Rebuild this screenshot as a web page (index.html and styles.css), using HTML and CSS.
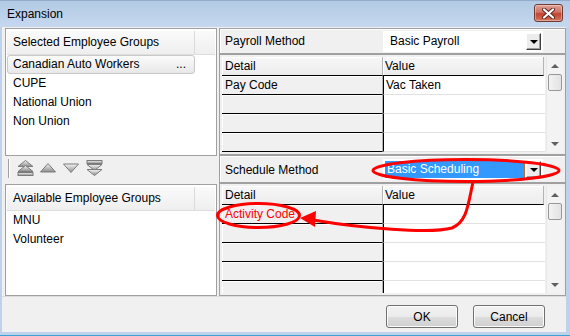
FILE: index.html
```html
<!DOCTYPE html>
<html lang="en">
<head>
    <meta charset="UTF-8">
    <title>Expansion</title>
    <link rel="stylesheet" href="styles.css">
</head>
<body>
<div class="window">
    <div class="titlebar">
        <span class="title">Expansion</span>
        <span class="close">
            <svg width="13" height="11" viewBox="0 0 13 11">
                <path d="M2 1.5 L11 9.5 M11 1.5 L2 9.5" stroke="#5a2620" stroke-width="4" stroke-linecap="round"/>
                <path d="M2 1.5 L11 9.5 M11 1.5 L2 9.5" stroke="#fff" stroke-width="2.2" stroke-linecap="round"/>
            </svg>
        </span>
    </div>
    <div class="frame">
        <div class="client">
            <div class="main">
                <div class="left">
                    <div class="list selected">
                        <div class="list-head"><div class="hcell">Selected Employee Groups</div><div class="hcell rest"></div></div>
                        <div class="item current"><span>Canadian Auto Workers</span><span class="more">...</span></div>
                        <div class="item">CUPE</div>
                        <div class="item">National Union</div>
                        <div class="item">Non Union</div>
                    </div>
                    <div class="toolbar">
                        <span class="grip"></span>
                        <svg class="tb top" width="17" height="16" viewBox="0 0 17 16">
                            <defs>
                                <linearGradient id="tg" x1="0" y1="0" x2="0" y2="1">
                                    <stop offset="0" stop-color="#f6f6f6"/>
                                    <stop offset="1" stop-color="#8c8c8c"/>
                                </linearGradient>
                            </defs>
                            <path d="M8.5 0.5 L16 6.5 H1 Z" fill="url(#tg)" stroke="#7c7c7c"/>
                            <path d="M8.5 5.5 L16 11.5 H1 Z" fill="url(#tg)" stroke="#7c7c7c"/>
                            <rect x="1" y="12.5" width="15" height="3" fill="url(#tg)" stroke="#7c7c7c"/>
                        </svg>
                        <svg class="tb up" width="16" height="10" viewBox="0 0 16 10">
                            <path d="M8 0.5 L15.5 9 H0.5 Z" fill="url(#tg)" stroke="#7c7c7c"/>
                        </svg>
                        <svg class="tb down" width="16" height="10" viewBox="0 0 16 10">
                            <path d="M0.5 1 H15.5 L8 9.5 Z" fill="url(#tg)" stroke="#7c7c7c"/>
                        </svg>
                        <svg class="tb bottom" width="17" height="16" viewBox="0 0 17 16">
                            <rect x="1" y="0.5" width="15" height="3" fill="url(#tg)" stroke="#7c7c7c"/>
                            <path d="M1 4.5 H16 L8.5 10.5 Z" fill="url(#tg)" stroke="#7c7c7c"/>
                            <path d="M1 9.5 H16 L8.5 15.5 Z" fill="url(#tg)" stroke="#7c7c7c"/>
                        </svg>
                    </div>
                    <div class="list available">
                        <div class="list-head"><div class="hcell">Available Employee Groups</div><div class="hcell rest"></div></div>
                        <div class="item">MNU</div>
                        <div class="item">Volunteer</div>
                    </div>
                </div>

                <div class="right">
                    <div class="method payroll">
                        <span class="method-label">Payroll Method</span>
                        <div class="combo">
                            <span class="combo-text">Basic Payroll</span>
                            <span class="combo-btn"><i class="caret"></i></span>
                        </div>
                    </div>
                    <div class="grid grid-payroll">
                        <div class="table">
                            <div class="th">Detail</div><div class="th value">Value</div>
                            <div class="rh">Pay Code</div><div class="td">Vac Taken</div>
                            <div class="rh"></div><div class="td"></div>
                            <div class="rh"></div><div class="td"></div>
                            <div class="rh"></div><div class="td"></div>
                            <div class="rh"></div><div class="td"></div>
                        </div>
                        <div class="vscroll">
                            <span class="sb-btn"><i class="sb-up"></i></span>
                            <span class="thumb"></span>
                            <span class="sb-track"></span>
                            <span class="sb-btn"><i class="sb-down"></i></span>
                        </div>
                    </div>
                    <div class="method schedule">
                        <span class="method-label">Schedule Method</span>
                        <div class="combo">
                            <span class="combo-text chosen">Basic Scheduling</span>
                            <span class="combo-btn"><i class="caret"></i></span>
                        </div>
                    </div>
                    <div class="grid grid-schedule">
                        <div class="table">
                            <div class="th">Detail</div><div class="th value">Value</div>
                            <div class="rh required">Activity Code</div><div class="td"></div>
                            <div class="rh"></div><div class="td"></div>
                            <div class="rh"></div><div class="td"></div>
                            <div class="rh"></div><div class="td"></div>
                            <div class="rh"></div><div class="td"></div>
                        </div>
                        <div class="vscroll">
                            <span class="sb-btn"><i class="sb-up"></i></span>
                            <span class="thumb"></span>
                            <span class="sb-track"></span>
                            <span class="sb-btn"><i class="sb-down"></i></span>
                        </div>
                    </div>
                </div>
            </div>
            <div class="footer">
                <button class="btn">OK</button>
                <button class="btn">Cancel</button>
            </div>
        </div>
    </div>

    <!-- red callout drawn on top of the dialog -->
    <svg class="marks" width="570" height="336" viewBox="0 0 570 336">
        <g fill="none" stroke="#ff0000" stroke-width="3">
            <ellipse cx="466" cy="170.5" rx="93" ry="11"/>
            <ellipse cx="258.5" cy="215.5" rx="41" ry="12"/>
            <path d="M473 182 C468 205 467 222 452 228 C430 234 360 228 313 220"/>
        </g>
        <polygon points="300,218 316,211 315,227" fill="#ff0000"/>
    </svg>
</div>
</body>
</html>
```

FILE: styles.css
```css
* {
    box-sizing: border-box;
}

html,
body {
    margin: 0;
    padding: 0;
}

body {
    width: 570px;
    height: 336px;
    overflow: hidden;
    font-family: "Liberation Sans", Arial, sans-serif;
    font-size: 12px;
    color: #000;
}

.window {
    position: relative;
    width: 570px;
    height: 336px;
    background: #bed3eb;
}

.titlebar {
    height: 27px;
    display: flex;
    align-items: flex-start;
    padding: 0 7px;
    background: linear-gradient(#b3cae5, #c5d8ee);
    border-top: 1px solid #93acc9;
}

.title {
    line-height: 25px;
    padding-top: 1px;
}

.close {
    margin: 3px 0 0 auto;
    width: 29px;
    height: 18px;
    display: flex;
    align-items: center;
    justify-content: center;
    border: 1px solid #6e3a35;
    border-radius: 3px;
    background: linear-gradient(#e0a396 0%, #cf7262 45%, #c2432f 55%, #d5755f 100%);
    box-shadow: inset 0 0 0 1px rgba(255, 255, 255, 0.35);
}

.frame {
    height: 309px;
    padding: 0 4px 3px 2px;
    border-bottom: 1px solid #3aa3d4;
}

.client {
    height: 305px;
    background: #f0f0f0;
    display: flex;
    flex-direction: column;
}

.main {
    height: 269px;
    display: flex;
    gap: 2px;
    padding: 1px 0 0 3px;
}

/* left column */

.left {
    width: 212px;
    display: flex;
    flex-direction: column;
}

.list {
    background: #fff;
    border: 1px solid #a0a0a0;
    padding: 2px 1px 1px;
}

.selected {
    height: 128px;
}

.available {
    flex: 1;
}

.list-head {
    display: flex;
    height: 24px;
    background: linear-gradient(#fafafa, #efefef);
    border-bottom: 1px solid #dedede;
}

.hcell {
    width: 188px;
    line-height: 23px;
    padding-left: 6px;
    border-right: 1px solid #dadada;
}

.hcell.rest {
    flex: 1;
    border-right: 0;
}

.item {
    height: 19px;
    line-height: 19px;
    padding-left: 6px;
}

.item.current {
    width: 188px;
    display: flex;
    justify-content: space-between;
    padding: 0 8px 0 5px;
    line-height: 17px;
    border: 1px solid #c9c9c9;
    border-radius: 3px;
    background: linear-gradient(#fbfbfb, #e8e8e8);
}

.available .item:first-of-type {
    margin-top: 1px;
}

.toolbar {
    height: 28px;
    display: flex;
    align-items: flex-start;
    padding: 4px 0 0 3px;
}

.grip {
    width: 2px;
    height: 19px;
    margin-top: -1px;
    border-left: 1px solid #a0a0a0;
    border-right: 1px solid #fff;
}

.tb.top {
    margin-left: 7px;
}

.tb.up {
    margin-left: 6px;
    margin-top: 3px;
}

.tb.down {
    margin-left: 7px;
    margin-top: 3px;
}

.tb.bottom {
    margin-left: 7px;
}

/* right column */

.right {
    flex: 1;
    display: flex;
    flex-direction: column;
}

.method {
    display: flex;
    align-items: center;
    padding-left: 5px;
    border: 1px solid #a0a0a0;
    box-shadow: inset 1px 1px 0 #fff;
}

.payroll {
    height: 26px;
}

.schedule {
    height: 28px;
    padding-top: 1px;
}

.method-label {
    width: 158px;
}

.combo {
    width: 160px;
    height: 21px;
    display: flex;
    align-items: center;
    padding: 2px;
    background: #fff;
}

.combo-text {
    flex: 1;
    padding-left: 5px;
}

.combo-text.chosen {
    height: 17px;
    line-height: 17px;
    padding-left: 2px;
    margin-right: 1px;
    background: #3399ff;
    color: #fff;
    border-right: 1px solid #b8733a;
}

.combo-btn {
    width: 15px;
    height: 17px;
    display: flex;
    align-items: center;
    justify-content: center;
    background: #ececec;
    border: 1px solid;
    border-color: #fff #404040 #404040 #fff;
    box-shadow: inset -1px -1px 0 #a0a0a0;
}

.caret {
    width: 0;
    height: 0;
    border-left: 4px solid transparent;
    border-right: 4px solid transparent;
    border-top: 4px solid #000;
    margin-top: 1px;
}

.grid {
    display: flex;
    padding: 2px;
    border: 1px solid #a0a0a0;
    background: #f0f0f0;
    overflow: hidden;
}

.grid-payroll {
    height: 101px;
}

.grid-schedule {
    flex: 1;
}

.table {
    flex: 1;
    display: grid;
    grid-template-columns: 161px 1fr;
    grid-auto-rows: 19px;
    align-content: start;
    overflow: hidden;
}

.th {
    line-height: 19px;
    padding-left: 3px;
    background: linear-gradient(#f7f7f7, #ececec);
    border-bottom: 1px solid #000;
    border-right: 1px solid #b4b4b4;
    box-shadow: inset 1px 1px 0 #fff;
}

.th.value {
    padding-left: 2px;
    margin-right: 1px;
}

.rh {
    line-height: 19px;
    padding-left: 3px;
    background: #f0f0f0;
    border-bottom: 1px solid #000;
    border-right: 1px solid #b4b4b4;
    box-shadow: inset 1px 1px 0 #fff;
}

.rh.required {
    color: #ff0000;
}

.td {
    line-height: 19px;
    padding-left: 2px;
    background: #fff;
    border-left: 1px solid #000;
    border-bottom: 1px solid #e2e2e2;
}

.vscroll {
    width: 17px;
    margin-left: 1px;
    display: flex;
    flex-direction: column;
    background: #f3f3f3;
    border-left: 1px solid #e8e8e8;
}

.sb-btn {
    height: 17px;
    display: flex;
    align-items: center;
    justify-content: center;
}

.sb-up {
    width: 0;
    height: 0;
    border-left: 4px solid transparent;
    border-right: 4px solid transparent;
    border-bottom: 4px solid #606060;
}

.sb-down {
    width: 0;
    height: 0;
    border-left: 4px solid transparent;
    border-right: 4px solid transparent;
    border-top: 4px solid #606060;
}

.thumb {
    height: 17px;
    margin: 0 1px;
    border: 1px solid #979797;
    border-radius: 2px;
    background: linear-gradient(90deg, #f3f3f3, #e2e2e2);
}

.sb-track {
    flex: 1;
}

/* buttons */

.footer {
    flex: 1;
    display: flex;
    justify-content: flex-end;
    align-items: flex-start;
    gap: 15px;
    padding: 8px 21px 0 0;
    border-top: 1px solid #dcdcdc;
}

.btn {
    width: 72px;
    height: 23px;
    font-family: "Liberation Sans", Arial, sans-serif;
    font-size: 12px;
    color: #000;
    border: 1px solid #707070;
    border-radius: 3px;
    background: linear-gradient(#f2f2f2 0%, #ebebeb 50%, #dddddd 51%, #cfcfcf 100%);
    box-shadow: inset 0 0 0 1px #fcfcfc;
}

.marks {
    position: absolute;
    left: 0;
    top: 0;
    pointer-events: none;
}
```
